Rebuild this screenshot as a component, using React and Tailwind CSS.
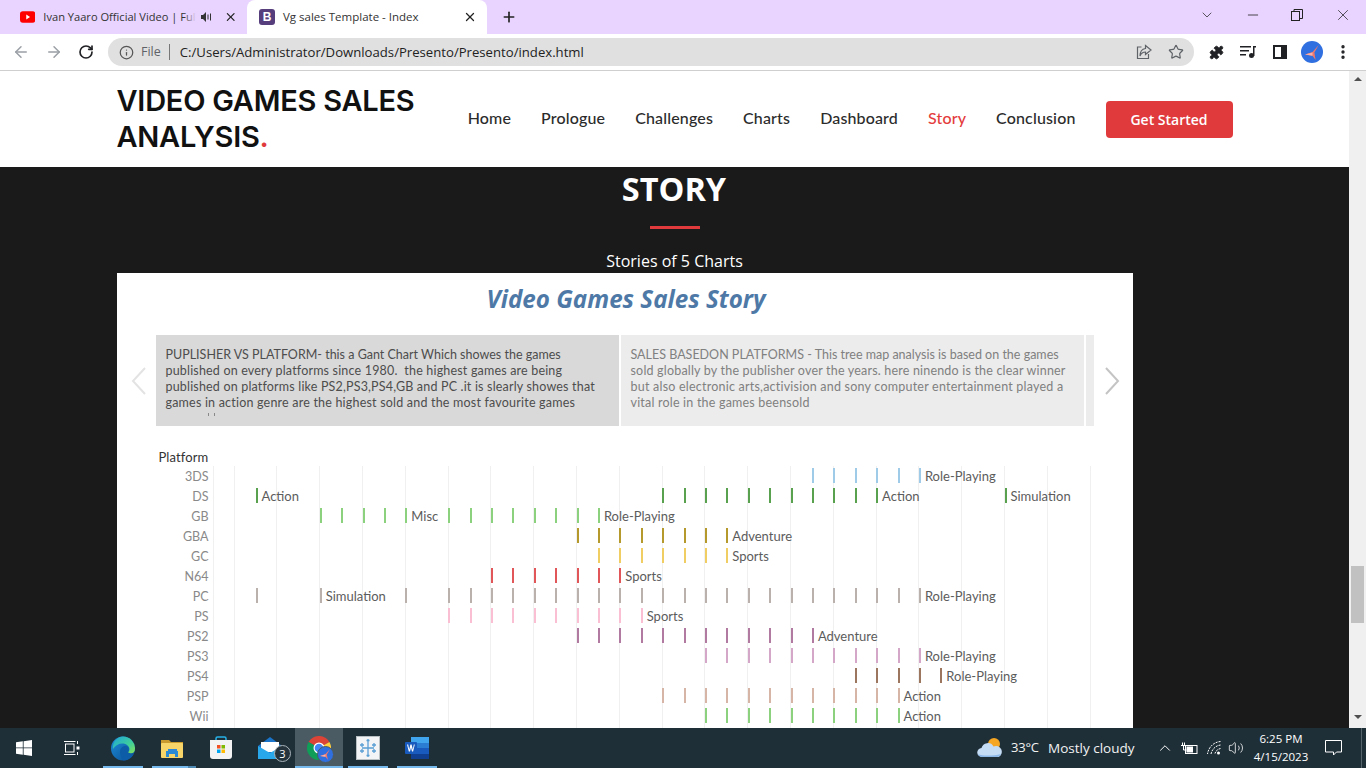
import React from "react";
import { ArrowLeft, ArrowRight, RotateCw, Info, Star, Plus, X, ChevronDown, Minus, ChevronUp, MoreVertical, Puzzle, Volume2 } from "lucide-react";

const navItems = ["Home", "Prologue", "Challenges", "Charts", "Dashboard", "Story", "Conclusion"];

// k = column index on the year axis, label sits to the right of that mark
const range = (from, to) => Array.from({ length: to - from + 1 }, (_, i) => from + i);

const rows = [
  { name: "3DS", color: "#a0cbe8", marks: range(26, 31), labels: { 31: "Role-Playing" } },
  { name: "DS", color: "#59a14f", marks: [0, ...range(19, 29), 35], labels: { 0: "Action", 29: "Action", 35: "Simulation" } },
  { name: "GB", color: "#8cd17d", marks: [3, 4, 5, 6, 7, ...range(9, 16)], labels: { 7: "Misc", 16: "Role-Playing" } },
  { name: "GBA", color: "#b6992d", marks: range(15, 22), labels: { 22: "Adventure" } },
  { name: "GC", color: "#f1ce63", marks: range(16, 22), labels: { 22: "Sports" } },
  { name: "N64", color: "#e15759", marks: range(11, 17), labels: { 17: "Sports" } },
  { name: "PC", color: "#bab0ac", marks: [0, 3, 7, ...range(9, 31)], labels: { 3: "Simulation", 31: "Role-Playing" } },
  { name: "PS", color: "#fabfd2", marks: range(9, 18), labels: { 18: "Sports" } },
  { name: "PS2", color: "#b07aa1", marks: range(15, 26), labels: { 26: "Adventure" } },
  { name: "PS3", color: "#d4a6c8", marks: range(21, 31), labels: { 31: "Role-Playing" } },
  { name: "PS4", color: "#9d7660", marks: range(28, 32), labels: { 32: "Role-Playing" } },
  { name: "PSP", color: "#d7b5a6", marks: range(19, 30), labels: { 30: "Action" } },
  { name: "Wii", color: "#8cd17d", marks: range(21, 30), labels: { 30: "Action" } },
];

const gridLines = [0, ...range(0, 20).map((n) => 21 + n * 42.8)];

function YoutubeIcon() {
  return (
    <svg width="16" height="12" viewBox="0 0 16 12">
      <rect width="16" height="12" rx="3" fill="#f00" />
      <path d="M6.5 3.5v5l4-2.5z" fill="#fff" />
    </svg>
  );
}

function BootstrapIcon() {
  return (
    <div className="w-4 h-4 rounded-[3px] bg-[#563d7c] flex items-center justify-center text-white text-[12px] font-bold leading-none font-['Liberation_Sans',sans-serif]">
      B
    </div>
  );
}

function SpeakerTab() {
  return (
    <svg width="11" height="10" viewBox="0 0 11 10" fill="#333">
      <path d="M0 3h2l3-3v10L2 7H0z" />
      <rect x="6.500" y="2.500" width="1" height="5" />
      <rect x="9" y="1.500" width="1" height="7" />
    </svg>
  );
}

function ShareIcon() {
  return (
    <svg width="16" height="16" viewBox="0 0 16 16" fill="none" stroke="#5f6368" strokeWidth="1.2">
      <path d="M5.500 3H1.500v11.500h11V10" />
      <path d="M9.500 1.500L15 6l-5.500 4.500V8C6.500 8 5 9.500 4 12c0-4 2-7 5.500-7.500z" />
    </svg>
  );
}

function MediaIcon() {
  return (
    <svg width="16" height="14" viewBox="0 0 16 14" fill="#202124">
      <rect x="0" y="1" width="11" height="1.500" />
      <rect x="0" y="5" width="9" height="1.500" />
      <rect x="0" y="9" width="6" height="1.500" />
      <rect x="13" y="1" width="1.500" height="10" />
      <rect x="13" y="1" width="3" height="1.500" />
      <circle cx="11.500" cy="10.500" r="2.500" />
    </svg>
  );
}

function SidePanelIcon() {
  return (
    <svg width="14" height="14" viewBox="0 0 14 14">
      <rect x="1" y="1" width="12" height="12" fill="#fff" stroke="#202124" strokeWidth="2" />
      <rect x="8" y="1" width="5" height="12" fill="#202124" />
    </svg>
  );
}

function Butterfly({ size = 12 }) {
  return (
    <svg width={size} height={size} viewBox="0 0 12 12">
      <path d="M11 0L7.500 6l1 6-2.500-3.500L0 7.500l6-2z" fill="#f0776c" />
      <path d="M6 6L0 7.500 6 8.500z" fill="#f8b0a8" />
    </svg>
  );
}

function WindowsLogo() {
  return (
    <svg width="16" height="16" viewBox="0 0 16 16" fill="#fff">
      <path d="M0 2.300L6.800 1.300V7.500H0zM7.600 1.200L16 0V7.500H7.600zM0 8.300H6.800V14.700L0 13.700zM7.600 8.300H16V16L7.600 14.800z" />
    </svg>
  );
}

function TaskViewIcon() {
  return (
    <svg width="16" height="16" viewBox="0 0 16 16" fill="none" stroke="#fff" strokeWidth="1">
      <rect x="1.500" y="4" width="8.500" height="8" />
      <path d="M0 1.500h11.500M0 14.500h11.500M13.500 1v3M13.500 12v3" />
      <rect x="12.500" y="6.500" width="3" height="3" fill="#fff" stroke="none" />
    </svg>
  );
}

function EdgeIcon() {
  return (
    <svg width="24" height="25" viewBox="0 0 24 24">
      <defs>
        <linearGradient id="edgeA" x1="0" y1="0" x2="1" y2="1">
          <stop offset="0" stopColor="#1fa5d8" />
          <stop offset="0.600" stopColor="#3fcf9a" />
          <stop offset="1" stopColor="#86e05c" />
        </linearGradient>
        <linearGradient id="edgeB" x1="0" y1="0" x2="1" y2="1">
          <stop offset="0" stopColor="#1d8fdb" />
          <stop offset="1" stopColor="#0a4c90" />
        </linearGradient>
      </defs>
      <circle cx="12" cy="12" r="12" fill="url(#edgeB)" />
      <path d="M12 0A12 12 0 0 1 24 12.500C24 16.500 20.500 17.500 17 16c2-2 2-5.500-1-7.500C11.500 5.500 5 7.500 2 12.500 1 6 6 0 12 0z" fill="url(#edgeA)" />
      <path d="M9 15c0-3 3-6 6-5.500 2.500.5 3 4 1.500 6C19 18.500 22 19 23 17c-2 4-6 7-10 7-2.500 0-4-6-4-9z" fill="#0d5ca8" />
    </svg>
  );
}

function ExplorerIcon() {
  return (
    <svg width="22" height="20" viewBox="0 0 22 20">
      <path d="M0 2h8l2 2h12v3H0z" fill="#c99a2e" />
      <rect x="0" y="5" width="22" height="15" rx="1" fill="#f8d568" />
      <rect x="7" y="11" width="9" height="2" fill="#2e88d8" />
      <path d="M5 13h12v6h-3v-3H8v3H5z" fill="#2a8ad4" />
    </svg>
  );
}

function StoreIcon() {
  return (
    <svg width="24" height="24" viewBox="0 0 24 24">
      <path d="M7 5V2.500A1.500 1.500 0 0 1 8.500 1h7A1.500 1.500 0 0 1 17 2.500V5" fill="none" stroke="#27b3e8" strokeWidth="1.500" />
      <path d="M1 4h22v16a3 3 0 0 1-3 3H4a3 3 0 0 1-3-3z" fill="#f3f3f3" />
      <rect x="8" y="9" width="3.500" height="3.500" fill="#f25022" />
      <rect x="12.500" y="9" width="3.500" height="3.500" fill="#7fba00" />
      <rect x="8" y="13.500" width="3.500" height="3.500" fill="#00a4ef" />
      <rect x="12.500" y="13.500" width="3.500" height="3.500" fill="#ffb900" />
    </svg>
  );
}

function MailIcon() {
  return (
    <div className="relative w-6 h-[22px]">
      <svg width="24" height="22" viewBox="0 0 24 22">
        <path d="M0 9L12 0l12 9v13H0z" fill="#1a74c9" />
        <path d="M3 5h18v10H3z" fill="#fff" />
        <path d="M0 9l12 7 12-7v13H0z" fill="#28a8ea" />
      </svg>
      <div className="absolute left-4 top-[8px] w-[17px] h-[17px] rounded-full border border-[#aab4ba] bg-[#25343c] flex items-center justify-center text-white text-[11px] leading-none font-['Open_Sans',sans-serif]">
        3
      </div>
    </div>
  );
}

function ChromeIcon() {
  return (
    <div className="relative w-6 h-6">
      <svg width="24" height="24" viewBox="0 0 24 24">
        <path d="M12 12L1.600 6A12 12 0 0 1 22.400 6z" fill="#db4437" />
        <path d="M12 12l-10.400-6A12 12 0 0 0 12 24z" fill="#0f9d58" />
        <path d="M12 12h0L22.400 6A12 12 0 0 1 12 24z" fill="#ffcd40" />
        <circle cx="12" cy="12" r="5.500" fill="#fff" />
        <circle cx="12" cy="12" r="4.300" fill="#4285f4" />
      </svg>
      <div className="absolute left-[10px] top-[10px] w-[17px] h-[17px] rounded-full bg-[#2f6fe0] border border-[#4b5b64] flex items-center justify-center">
        <Butterfly size={11} />
      </div>
    </div>
  );
}

function TableauIcon() {
  return (
    <svg width="24" height="24" viewBox="0 0 24 24">
      <rect x="0.500" y="0.500" width="23" height="23" fill="#f2f4f5" stroke="#b8c0c4" />
      <g stroke="#5a9fd4" strokeWidth="1.300">
        <path d="M12 6v12M6 12h12" />
        <path d="M6 7v4M4 9h4M18 7v4M16 9h4M6 13v4M4 15h4M18 13v4M16 15h4" />
        <path d="M12 3v3M10.500 4.500h3M12 18v3M10.500 19.500h3" />
      </g>
    </svg>
  );
}

function WordIcon() {
  return (
    <svg width="24" height="22" viewBox="0 0 24 22">
      <rect x="6" y="0" width="18" height="22" rx="1" fill="#2b7cd3" />
      <rect x="6" y="0" width="18" height="6" fill="#41a5ee" />
      <rect x="6" y="11" width="18" height="6" fill="#185abd" />
      <rect x="6" y="17" width="18" height="5" fill="#103f91" />
      <rect x="0" y="5" width="12" height="12" rx="1" fill="#185abd" />
      <path d="M2 7.500h1.200l1 5 1.200-5h1.200l1.200 5 1-5H9.800l-1.700 7H7L6 10.500 5 14.500H3.800z" fill="#fff" />
    </svg>
  );
}

function WeatherIcon() {
  return (
    <svg width="26" height="22" viewBox="0 0 26 22">
      <circle cx="17" cy="7" r="6" fill="#f5a623" />
      <path d="M5 20a4.500 4.500 0 0 1-.5-9 6.500 6.500 0 0 1 12-1.500 5.500 5.500 0 0 1 5 10.500z" fill="#c5dcf5" />
      <path d="M1 17c4 2 15 2 23 0-1 2-2 3-4 3H5c-2 0-3-1-4-3z" fill="#8cb8e8" />
    </svg>
  );
}

function BatteryIcon() {
  return (
    <svg width="17" height="13" viewBox="0 0 17 13" fill="none" stroke="#fff">
      <rect x="4.500" y="3.500" width="11.500" height="8" />
      <rect x="5.500" y="4.500" width="6.500" height="6" fill="#fff" stroke="none" />
      <path d="M0 3.500h5M1.500 0.500v3M3.500 0.500v3M2.500 4v4h3" />
    </svg>
  );
}

function WifiIcon() {
  return (
    <svg width="15" height="14" viewBox="0 0 15 14" fill="none" stroke="#fff" strokeWidth="1">
      <path d="M13.500 0.500C7 1 1.500 6 0.500 13" strokeDasharray="2 1" />
      <path d="M13.500 4C9 4.500 5 8 4 13" strokeDasharray="2 1" />
      <path d="M13.500 7.500C11 8 8.500 10 8 12.500" strokeDasharray="2 1" />
      <circle cx="11.500" cy="12" r="1.500" fill="#fff" stroke="none" />
    </svg>
  );
}

function NotificationIcon() {
  return (
    <svg width="17" height="16" viewBox="0 0 17 16" fill="none" stroke="#fff" strokeWidth="1">
      <path d="M0.500 0.500h16v11.500h-5l-3 3v-3h-8z" />
    </svg>
  );
}

function TaskbarSlot({ children, line = "none" }) {
  return (
    <div className={`relative w-12 h-10 flex items-center justify-center ${line === "active" ? "bg-[#4b5b64]" : ""}`}>
      {children}
      {line === "active" && <div className="absolute bottom-0 left-0 right-0 h-[2px] bg-[#76b9ed]" />}
      {line === "open" && <div className="absolute bottom-0 left-1 right-1 h-[2px] bg-[#76b9ed]" />}
      {line === "group" && <div className="absolute bottom-0 left-1 right-0 h-[2px] bg-[#76b9ed] border-r-[8px] border-[#4f8ab5]" />}
    </div>
  );
}

function StoryChart() {
  return (
    <div className="pl-[41px] pt-[23px] w-[977px]">
      <div className="pl-px text-[13px] leading-4 tracking-[0.1px] text-[#333] font-['Lato',sans-serif]">Platform</div>
      <div className="flex mt-[1px]">
        <div className="w-[55px] pr-[4px] shrink-0">
          {rows.map((row) => (
            <div key={row.name} className="h-5 pt-px text-right text-[12.500px] leading-5 text-[#898989] font-['Lato',sans-serif]">
              {row.name}
            </div>
          ))}
        </div>
        <div className="relative flex-1">
          {gridLines.map((x) => (
            <div key={x} className="absolute top-0 bottom-[-20px] w-px bg-[#f0f0f0]" style={{ left: x }} />
          ))}
          {rows.map((row) => (
            <div key={row.name} className="relative h-5">
              {row.marks.map((k) => (
                <React.Fragment key={k}>
                  <div
                    className="absolute top-[2px] w-[2px] h-[15px]"
                    style={{ left: 43 + k * 21.4, backgroundColor: row.color }}
                  />
                  {row.labels[k] && (
                    <div
                      className="absolute top-0 text-[13px] leading-5 text-[#5c5c5c] whitespace-nowrap font-['Lato',sans-serif]"
                      style={{ left: 49 + k * 21.4 }}
                    >
                      {row.labels[k]}
                    </div>
                  )}
                </React.Fragment>
              ))}
            </div>
          ))}
        </div>
      </div>
    </div>
  );
}

export default function App() {
  return (
    <div className="w-[1366px] h-[768px] overflow-hidden flex flex-col bg-white font-['Open_Sans',sans-serif]">
      {/* tab strip */}
      <div className="h-[34px] shrink-0 bg-[#e8d4fe] flex items-stretch pl-2">
        <div className="w-[239px] flex items-center pl-3 pr-[10px]">
          <YoutubeIcon />
          <div className="relative ml-2 w-[153px] whitespace-nowrap text-[11.100px] text-[#333]">
            Ivan Yaaro Official Video | Ful
            <div className="absolute top-0 bottom-0 right-0 w-3 bg-gradient-to-r from-transparent to-[#e8d4fe]" />
          </div>
          <div className="ml-[5px]"><SpeakerTab /></div>
          <X size={14} strokeWidth={2.200} className="ml-[12px] text-[#222]" />
        </div>
        <div className="w-[240px] bg-white rounded-t-lg flex items-center pl-3 pr-[10px]">
          <BootstrapIcon />
          <div className="ml-2 flex-1 whitespace-nowrap text-[11.500px] text-[#333]">Vg sales Template - Index</div>
          <X size={14} strokeWidth={2.200} className="text-[#222]" />
        </div>
        <div className="flex items-center ml-[14px]">
          <Plus size={16} strokeWidth={2.500} className="text-[#222]" />
        </div>
        <div className="ml-auto flex items-center pb-1">
          <ChevronDown size={16} strokeWidth={1.200} className="text-[#333] mr-[30px]" />
          <Minus size={16} strokeWidth={1.200} className="text-[#222] mr-[30px]" />
          <svg width="12" height="12" viewBox="0 0 12 12" fill="none" stroke="#222" className="mr-[31px]">
            <rect x="0.500" y="2.500" width="8" height="9" />
            <path d="M3 2.500V0.500h8.500v9h-3" />
          </svg>
          <X size={18} strokeWidth={1} className="text-[#222] mr-[14px]" />
        </div>
      </div>

      {/* toolbar */}
      <div className="h-[37px] shrink-0 bg-white border-b border-[#cfcfcf] flex items-center">
        <ArrowLeft size={18} strokeWidth={2} className="ml-3 text-[#9aa0a6]" />
        <ArrowRight size={18} strokeWidth={2} className="ml-[15px] text-[#9aa0a6]" />
        <RotateCw size={16} strokeWidth={2.500} className="ml-[15px] text-[#202124]" />
        <div className="ml-[14px] w-[1086px] h-[28px] rounded-full bg-[#e0e0e0] flex items-center pl-[11px] pr-[10px]">
          <Info size={15} strokeWidth={2} className="text-[#555]" />
          <span className="ml-[7px] pt-px text-[12.500px] text-[#5f6368]">File</span>
          <span className="ml-2 w-px h-4 bg-[#777]" />
          <span className="ml-[10px] pt-px text-[13.150px] text-[#222] whitespace-nowrap">C:/Users/Administrator/Downloads/Presento/Presento/index.html</span>
          <div className="ml-auto flex items-center gap-4">
            <ShareIcon />
            <Star size={16} strokeWidth={1.800} className="text-[#5f6368]" />
          </div>
        </div>
        <Puzzle size={15} fill="#202124" strokeWidth={1.500} className="ml-[15px] text-[#202124]" />
        <div className="ml-[16px]"><MediaIcon /></div>
        <div className="ml-[17px]"><SidePanelIcon /></div>
        <div className="ml-[14px] w-[22px] h-[22px] rounded-full bg-[#2f6fe0] flex items-center justify-center"><Butterfly size={15} /></div>
        <MoreVertical size={18} strokeWidth={2.500} className="ml-[11px] text-[#202124]" />
      </div>

      {/* page + scrollbar */}
      <div className="flex-1 flex min-h-0">
        <div className="w-[1349px] shrink-0 overflow-hidden bg-[#1a1a1a]">
          <header className="h-[96px] bg-white">
            <div className="w-[1116px] mx-auto h-full flex items-center justify-between">
              <div className="w-[310px] pb-[1px] text-[29px] leading-[36px] font-semibold text-[#111] font-['Inter',sans-serif] tracking-[-0.25px]">
                VIDEO GAMES SALES ANALYSIS<span className="text-[#e03a3c]">.</span>
              </div>
              <div className="flex items-center">
                <nav className="flex items-center gap-[30px] pb-[2px] text-[16px] tracking-[0.15px] font-medium text-[#2b2b2b] font-['Lato',sans-serif]">
                  {navItems.map((item) => (
                    <a key={item} className={item === "Story" ? "text-[#e43c3c]" : ""}>{item}</a>
                  ))}
                </nav>
                <button className="ml-[30px] w-[127px] h-[37px] rounded bg-[#e03a3c] text-white text-[14px] font-semibold">Get Started</button>
              </div>
            </div>
          </header>

          <section className="w-[1116px] mx-auto">
            <h2 className="mt-[2px] pr-[1px] text-center text-[32.500px] leading-[40px] font-bold text-white">STORY</h2>
            <div className="mx-auto mt-[17px] w-[50px] h-[3px] bg-[#e03a3c]" />
            <p className="mt-[20px] text-center text-[16px] leading-6 font-medium text-white">Stories of 5 Charts</p>

            <div className="w-[1016px] h-[460px] bg-white">
              <h3 className="pt-[10px] pl-[3px] text-center text-[24.200px] leading-8 font-bold italic text-[#4e79a7]">Video Games Sales Story</h3>
              <div className="mt-[20px] flex items-center">
                <svg width="16" height="28" viewBox="0 0 16 28" fill="none" stroke="#e3e3e3" strokeWidth="2" className="ml-[14px] shrink-0">
                  <path d="M14 1L2 14l12 13" />
                </svg>
                <div className="ml-[9px] flex gap-[2px] h-[91px] text-[12.500px] leading-4 whitespace-nowrap font-['Lato',sans-serif]">
                  <div className="relative w-[463px] bg-[#d9d9d9] pl-[10px] pt-[12px] text-[#4d4d4d]">
                    <div>PUPLISHER VS PLATFORM- this a Gant Chart Which showes the games</div>
                    <div className="tracking-[0.18px]">published on every platforms since 1980.&nbsp; the highest games are being</div>
                    <div className="tracking-[0.18px]">published on platforms like PS2,PS3,PS4,GB and PC .it is slearly showes that</div>
                    <div className="tracking-[0.2px]">games in action genre are the highest sold and the most favourite games</div>
                    <span className="absolute left-[52px] top-[78px] w-px h-[3px] bg-[#888]" />
                    <span className="absolute left-[58px] top-[78px] w-px h-[3px] bg-[#888]" />
                  </div>
                  <div className="w-[463px] bg-[#ececec] pl-[10px] pt-[12px] text-[#808080]">
                    <div>SALES BASEDON PLATFORMS - This tree map analysis is based on the games</div>
                    <div className="tracking-[0.19px]">sold globally by the publisher over the years. here ninendo is the clear winner</div>
                    <div className="tracking-[0.22px]">but also electronic arts,activision and sony computer entertainment played a</div>
                    <div className="tracking-[0.2px]">vital role in the games beensold</div>
                  </div>
                  <div className="w-2 bg-[#ececec]" />
                </div>
                <svg width="16" height="28" viewBox="0 0 16 28" fill="none" stroke="#c4c4c4" strokeWidth="2" className="ml-[10px] shrink-0">
                  <path d="M2 1l12 13L2 27" />
                </svg>
              </div>
              <StoryChart />
            </div>
          </section>
        </div>

        {/* scrollbar */}
        <div className="w-[17px] bg-[#f0f0f0] flex flex-col items-center pt-[6px]">
          <div className="w-0 h-0 border-x-[4px] border-x-transparent border-b-[4px] border-b-[#505050]" />
          <div className="mt-[485px] w-[13px] h-[57px] bg-[#c1c1c1]" />
          <div className="mt-[92px] w-0 h-0 border-x-[4px] border-x-transparent border-t-[4px] border-t-[#505050]" />
        </div>
      </div>

      {/* taskbar */}
      <div className="h-10 shrink-0 bg-[#1f2f38] flex items-center text-white">
        <div className="w-12 flex justify-center"><WindowsLogo /></div>
        <div className="w-12 flex justify-center"><TaskViewIcon /></div>
        <div className="ml-[3px] flex gap-px">
          <TaskbarSlot line="open"><EdgeIcon /></TaskbarSlot>
          <TaskbarSlot line="group"><ExplorerIcon /></TaskbarSlot>
          <TaskbarSlot><StoreIcon /></TaskbarSlot>
          <TaskbarSlot><MailIcon /></TaskbarSlot>
          <TaskbarSlot line="active"><ChromeIcon /></TaskbarSlot>
          <TaskbarSlot line="open"><TableauIcon /></TaskbarSlot>
          <TaskbarSlot line="open"><WordIcon /></TaskbarSlot>
        </div>
        <div className="ml-auto flex items-center">
          <WeatherIcon />
          <span className="ml-[8px] w-[29px] text-[13px] tracking-[-0.2px] whitespace-nowrap text-[#f2f2f2]">33°C</span>
          <span className="ml-[8px] w-[86px] text-[13.500px] whitespace-nowrap text-[#f2f2f2]">Mostly cloudy</span>
          <ChevronUp size={18} strokeWidth={1.300} className="ml-[22px]" />
          <div className="ml-[7px]"><BatteryIcon /></div>
          <div className="ml-[9px]"><WifiIcon /></div>
          <Volume2 size={16} strokeWidth={1.200} className="ml-[6px]" />
          <div className="ml-[7px] w-[60px] text-center text-[11.500px] leading-[18px] whitespace-nowrap">
            <div>6:25 PM</div>
            <div>4/15/2023</div>
          </div>
          <div className="ml-[14px]"><NotificationIcon /></div>
          <div className="ml-[19px] mr-[4px] w-px h-10 bg-[#55636b]" />
        </div>
      </div>
    </div>
  );
}
